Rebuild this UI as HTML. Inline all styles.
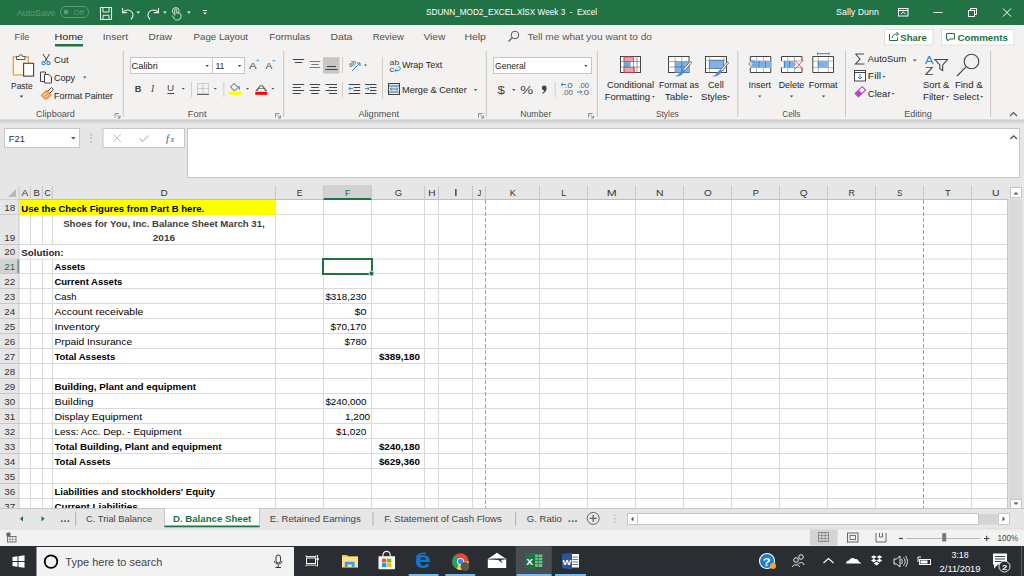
<!DOCTYPE html>
<html><head><meta charset="utf-8"><style>
html,body{margin:0;padding:0;background:#fff;overflow:hidden;width:1024px;height:576px}
svg{display:block;font-family:"Liberation Sans", sans-serif}
</style></head><body>
<svg width="1024" height="576" viewBox="0 0 1024 576">
<rect x="0" y="0" width="1024" height="25" fill="#217346" />
<text x="16.75" y="15.50" font-size="9.2" fill="#5f9c78" font-weight="normal" textLength="38.60" lengthAdjust="spacingAndGlyphs" >AutoSave</text>
<rect x="60.5" y="6.5" width="28" height="11" rx="5.5" fill="none" stroke="#5f9c78" stroke-width="1"/>
<circle cx="66" cy="12" r="2.4" fill="#5f9c78"/>
<text x="73.52" y="15.30" font-size="8" fill="#5f9c78" font-weight="normal" textLength="10.36" lengthAdjust="spacingAndGlyphs" >Off</text>
<path d="M100.5 7.5 h11 v12 h-11 z" stroke="#e6efe9" fill="none" stroke-width="1.1" />
<path d="M103 7.5 v4.5 h6 v-4.5" stroke="#e6efe9" fill="none" stroke-width="1" />
<path d="M103 19.5 v-4.2 h6 v4.2" stroke="#e6efe9" fill="none" stroke-width="1" />
<path d="M122.5 8 v4.6 h4.6" stroke="#e6efe9" fill="none" stroke-width="1.1" />
<path d="M122.8 12.3 c2.5 -3 7.5 -3.2 9.5 0.2 c1.5 2.6 0.5 5 -1.5 7" stroke="#e6efe9" fill="none" stroke-width="1.1" />
<path d="M136.3 11.5 h3.8 l-1.9 2.2 z" stroke="none" fill="#e6efe9" stroke-width="1" />
<path d="M158.5 8 v4.6 h-4.6" stroke="#e6efe9" fill="none" stroke-width="1.1" />
<path d="M158.2 12.3 c-2.5 -3 -7.5 -3.2 -9.5 0.2 c-1.5 2.6 -0.5 5 1.5 7" stroke="#e6efe9" fill="none" stroke-width="1.1" />
<path d="M163 11.5 h3.8 l-1.9 2.2 z" stroke="none" fill="#e6efe9" stroke-width="1" />
<circle cx="175.8" cy="11" r="3.4" fill="none" stroke="#e6efe9" stroke-width="0.9"/>
<path d="M174.8 15.5 v-5.5 a1 1 0 0 1 2 0 v3.3 c1.8 -0.6 4.2 -0.2 4.2 1.8 v1.5 c0 2 -1.5 3.4 -3.5 3.4 h-0.8 c-1.4 0 -2.3 -0.8 -2.9 -2 l-1.3 -2.5" stroke="#e6efe9" fill="#217346" stroke-width="0.9" />
<path d="M187 11.5 h3.8 l-1.9 2.2 z" stroke="none" fill="#e6efe9" stroke-width="1" />
<line x1="203" y1="10.5" x2="207" y2="10.5" stroke="#e6efe9" stroke-width="1" />
<path d="M203 12.5 h4 l-2 2 z" stroke="none" fill="#e6efe9" stroke-width="1" />
<text x="426.01" y="15.20" font-size="9.8" fill="#ffffff" font-weight="normal" textLength="171.08" lengthAdjust="spacingAndGlyphs" >SDUNN_MOD2_EXCEL.XlSX Week 3  -  Excel</text>
<text x="836.11" y="15.30" font-size="9.8" fill="#ffffff" font-weight="normal" textLength="42.78" lengthAdjust="spacingAndGlyphs" >Sally Dunn</text>
<rect x="898.5" y="8.5" width="9.5" height="7.5" fill="none" stroke="#ffffff" stroke-width="1"/>
<line x1="898.5" y1="10.5" x2="908" y2="10.5" stroke="#ffffff" stroke-width="1" />
<path d="M901 14 l2.2-2.2 l2.2 2.2" stroke="#ffffff" fill="none" stroke-width="1" />
<line x1="933.5" y1="12.5" x2="942.5" y2="12.5" stroke="#ffffff" stroke-width="1" />
<rect x="968.5" y="10.5" width="6" height="6" fill="none" stroke="#ffffff" stroke-width="1"/>
<path d="M970.5 10.5 v-2 h6 v6 h-2" stroke="#ffffff" fill="none" stroke-width="1" />
<path d="M1003 8.5 l8 8 M1011 8.5 l-8 8" stroke="#ffffff" fill="none" stroke-width="1" />
<rect x="0" y="25" width="1024" height="95" fill="#f3f2f1" />
<text x="14.62" y="40.10" font-size="9.6" fill="#505050" font-weight="normal" textLength="14.65" lengthAdjust="spacingAndGlyphs" >File</text>
<text x="54.42" y="40.10" font-size="9.6" fill="#262626" font-weight="normal" textLength="28.65" lengthAdjust="spacingAndGlyphs" >Home</text>
<text x="102.72" y="40.10" font-size="9.6" fill="#505050" font-weight="normal" textLength="25.25" lengthAdjust="spacingAndGlyphs" >Insert</text>
<text x="148.62" y="40.10" font-size="9.6" fill="#505050" font-weight="normal" textLength="23.55" lengthAdjust="spacingAndGlyphs" >Draw</text>
<text x="193.62" y="40.10" font-size="9.6" fill="#505050" font-weight="normal" textLength="54.45" lengthAdjust="spacingAndGlyphs" >Page Layout</text>
<text x="269.22" y="40.10" font-size="9.6" fill="#505050" font-weight="normal" textLength="40.95" lengthAdjust="spacingAndGlyphs" >Formulas</text>
<text x="330.42" y="40.10" font-size="9.6" fill="#505050" font-weight="normal" textLength="21.95" lengthAdjust="spacingAndGlyphs" >Data</text>
<text x="372.72" y="40.10" font-size="9.6" fill="#505050" font-weight="normal" textLength="31.15" lengthAdjust="spacingAndGlyphs" >Review</text>
<text x="423.42" y="40.10" font-size="9.6" fill="#505050" font-weight="normal" textLength="21.95" lengthAdjust="spacingAndGlyphs" >View</text>
<text x="464.42" y="40.10" font-size="9.6" fill="#505050" font-weight="normal" textLength="21.55" lengthAdjust="spacingAndGlyphs" >Help</text>
<rect x="55" y="44" width="28" height="2.5" fill="#217346" />
<circle cx="515" cy="35" r="3.8" fill="none" stroke="#555" stroke-width="1"/>
<line x1="512.3" y1="37.7" x2="508.5" y2="41.5" stroke="#555" stroke-width="1.1" />
<text x="527.42" y="40.10" font-size="9.6" fill="#595959" font-weight="normal" textLength="124.55" lengthAdjust="spacingAndGlyphs" >Tell me what you want to do</text>
<rect x="884.5" y="29.5" width="48.5" height="15.5" fill="#ffffff" stroke="#e1dfdd" stroke-width="1"/>
<rect x="941.5" y="29.5" width="72.5" height="15.5" fill="#ffffff" stroke="#e1dfdd" stroke-width="1"/>
<path d="M889.5 34 v6.5 h8 v-3 M892 38 c0.5-2.5 2-4 4.5-4 h1.5 M896.5 32 l2 2 l-2 2" stroke="#1e7145" fill="none" stroke-width="1" />
<text x="900.31" y="40.50" font-size="9.8" fill="#1e7145" font-weight="bold" textLength="26.48" lengthAdjust="spacingAndGlyphs" >Share</text>
<path d="M946.5 33.5 h8 v5.5 h-5 l-2 2 v-2 h-1 z" stroke="#1e7145" fill="none" stroke-width="1" />
<text x="957.41" y="40.50" font-size="9.8" fill="#1e7145" font-weight="bold" textLength="50.58" lengthAdjust="spacingAndGlyphs" >Comments</text>
<line x1="123.3" y1="51" x2="123.3" y2="117" stroke="#c8c6c4" stroke-width="1" />
<line x1="283.7" y1="51" x2="283.7" y2="117" stroke="#c8c6c4" stroke-width="1" />
<line x1="486.3" y1="51" x2="486.3" y2="117" stroke="#c8c6c4" stroke-width="1" />
<line x1="597.3" y1="51" x2="597.3" y2="117" stroke="#c8c6c4" stroke-width="1" />
<line x1="737.8" y1="51" x2="737.8" y2="117" stroke="#c8c6c4" stroke-width="1" />
<line x1="845.5" y1="51" x2="845.5" y2="117" stroke="#c8c6c4" stroke-width="1" />
<line x1="990.6" y1="51" x2="990.6" y2="117" stroke="#c8c6c4" stroke-width="1" />
<text x="36.06" y="117.00" font-size="9" fill="#505050" font-weight="normal" textLength="38.78" lengthAdjust="spacingAndGlyphs" >Clipboard</text>
<text x="187.86" y="117.00" font-size="9" fill="#505050" font-weight="normal" textLength="18.68" lengthAdjust="spacingAndGlyphs" >Font</text>
<text x="358.46" y="117.00" font-size="9" fill="#505050" font-weight="normal" textLength="40.58" lengthAdjust="spacingAndGlyphs" >Alignment</text>
<text x="520.16" y="117.00" font-size="9" fill="#505050" font-weight="normal" textLength="31.18" lengthAdjust="spacingAndGlyphs" >Number</text>
<text x="655.96" y="117.00" font-size="9" fill="#505050" font-weight="normal" textLength="22.78" lengthAdjust="spacingAndGlyphs" >Styles</text>
<text x="782.26" y="117.00" font-size="9" fill="#505050" font-weight="normal" textLength="18.18" lengthAdjust="spacingAndGlyphs" >Cells</text>
<text x="904.16" y="117.00" font-size="9" fill="#505050" font-weight="normal" textLength="27.68" lengthAdjust="spacingAndGlyphs" >Editing</text>
<path d="M115.0 117.5 v-4 h4 M116.5 114.5 l3.5 3.5 M120.0 115.5 v2.5 h-2.5" stroke="#777" fill="none" stroke-width="0.8" />
<path d="M275.5 117.5 v-4 h4 M277 114.5 l3.5 3.5 M280.5 115.5 v2.5 h-2.5" stroke="#777" fill="none" stroke-width="0.8" />
<path d="M478.5 117.5 v-4 h4 M480 114.5 l3.5 3.5 M483.5 115.5 v2.5 h-2.5" stroke="#777" fill="none" stroke-width="0.8" />
<path d="M588.5 117.5 v-4 h4 M590 114.5 l3.5 3.5 M593.5 115.5 v2.5 h-2.5" stroke="#777" fill="none" stroke-width="0.8" />
<path d="M1010 116 l3.5 -3.5 l3.5 3.5" stroke="#555" fill="none" stroke-width="1.2" />
<rect x="13.3" y="56.8" width="15" height="18.2" fill="#fdf6ec" stroke="#f0a048" stroke-width="1.3"/>
<path d="M16.5 59.5 v-3 h2.5 a1.8 1.8 0 0 1 3.6 0 h2.5 v3 z" stroke="#555" fill="#fff" stroke-width="1" />
<rect x="23.6" y="63.3" width="10" height="12.8" fill="#ffffff" stroke="#444" stroke-width="1.1"/>
<text x="11.02" y="88.50" font-size="9.6" fill="#262626" font-weight="normal" textLength="21.65" lengthAdjust="spacingAndGlyphs" >Paste</text>
<path d="M19.5 95.5 h4 l-2 2.2 z" stroke="none" fill="#555" stroke-width="1" />
<path d="M43 54 l4.5 7.5 M49.5 54 l-4.5 7.5" stroke="#444" fill="none" stroke-width="1" />
<circle cx="43.5" cy="63.2" r="1.6" fill="none" stroke="#2b88d8" stroke-width="1.1"/>
<circle cx="48.5" cy="63.2" r="1.6" fill="none" stroke="#2b88d8" stroke-width="1.1"/>
<text x="54.02" y="63.20" font-size="9.6" fill="#262626" font-weight="normal" textLength="14.55" lengthAdjust="spacingAndGlyphs" >Cut</text>
<path d="M40.5 72 h5 v9.5 h-5 z" stroke="#444" fill="none" stroke-width="1" />
<path d="M44.5 74.5 h4.5 l2.5 2.5 v6 h-7 z" stroke="#444" fill="#fff" stroke-width="1" />
<text x="54.02" y="80.50" font-size="9.6" fill="#262626" font-weight="normal" textLength="21.05" lengthAdjust="spacingAndGlyphs" >Copy</text>
<path d="M83 76.5 h3.5 l-1.75 2 z" stroke="none" fill="#555" stroke-width="1" />
<path d="M41 95.5 l5.5-5.5 l5 5 l-2 2 c-1.5 1.5 -3 2 -4.5 2.5 z" stroke="#e07b20" fill="#f39c4a" stroke-width="0.6" />
<path d="M43 96.5 l4 -4 M45 97.8 l3.5 -3.5" stroke="#fff" fill="none" stroke-width="0.8" />
<path d="M47.5 91.5 l4-4 M49.5 93.5 l4-4 M51.5 87.5 l2 2" stroke="#444" fill="none" stroke-width="1" />
<text x="54.02" y="98.70" font-size="9.6" fill="#262626" font-weight="normal" textLength="58.95" lengthAdjust="spacingAndGlyphs" >Format Painter</text>
<rect x="130.5" y="57.5" width="82" height="16" fill="#fff" stroke="#c8c6c4" stroke-width="1"/>
<rect x="212.5" y="57.5" width="32" height="16" fill="#fff" stroke="#c8c6c4" stroke-width="1"/>
<text x="131.42" y="69.10" font-size="9.6" fill="#262626" font-weight="normal" textLength="26.55" lengthAdjust="spacingAndGlyphs" >Calibri</text>
<text x="215.42" y="69.10" font-size="9.6" fill="#262626" font-weight="normal" textLength="8.95" lengthAdjust="spacingAndGlyphs" >11</text>
<path d="M205.5 65 h3.4 l-1.7 2 z" stroke="none" fill="#444" stroke-width="1" />
<path d="M237.9 65 h3.4 l-1.7 2 z" stroke="none" fill="#444" stroke-width="1" />
<text x="248.92" y="68.60" font-size="9.6" fill="#444" font-weight="normal" textLength="7.65" lengthAdjust="spacingAndGlyphs" >A</text>
<path d="M256.2 61.3 l1.5-1.5 l1.5 1.5" stroke="#2b88d8" fill="none" stroke-width="0.9" />
<text x="265.48" y="68.60" font-size="8.6" fill="#444" font-weight="normal" textLength="6.83" lengthAdjust="spacingAndGlyphs" >A</text>
<path d="M272.3 60 l1.5 1.5 l1.5-1.5" stroke="#2b88d8" fill="none" stroke-width="0.9" />
<text x="134.72" y="92.00" font-size="9.6" fill="#444" font-weight="bold" textLength="6.65" lengthAdjust="spacingAndGlyphs" >B</text>
<text x="151" y="92" font-size="9.6" fill="#444" font-style="italic" font-family="Liberation Serif">I</text>
<text x="166.96" y="91.00" font-size="9" fill="#444" font-weight="normal" textLength="7.08" lengthAdjust="spacingAndGlyphs" >U</text>
<line x1="167.5" y1="93.5" x2="174" y2="93.5" stroke="#444" stroke-width="1" />
<path d="M181.8 88 h3 l-1.5 1.8 z" stroke="none" fill="#555" stroke-width="1" />
<line x1="191.5" y1="82" x2="191.5" y2="97" stroke="#d0cecc" stroke-width="1" />
<rect x="197.5" y="83.5" width="11" height="10" fill="none" stroke="#9a9a9a" stroke-width="0.8" stroke-dasharray="1 1"/>
<line x1="203" y1="83.5" x2="203" y2="93.5" stroke="#9a9a9a" stroke-width="0.8" stroke-dasharray="1 1"/>
<line x1="197.5" y1="88.5" x2="208.5" y2="88.5" stroke="#9a9a9a" stroke-width="0.8" stroke-dasharray="1 1"/>
<line x1="197" y1="94.5" x2="209" y2="94.5" stroke="#666" stroke-width="1" />
<path d="M213.8 88 h3 l-1.5 1.8 z" stroke="none" fill="#555" stroke-width="1" />
<line x1="223.8" y1="82" x2="223.8" y2="97" stroke="#d0cecc" stroke-width="1" />
<path d="M230.5 87 l3.5-3.5 l4 4 l-3.5 3.5 z" stroke="#444" fill="none" stroke-width="0.9" />
<path d="M238.5 86 c1 1.5 1.5 2.5 0.5 3.5" stroke="#2b88d8" fill="none" stroke-width="1.2" />
<rect x="229" y="91.8" width="12.5" height="3" fill="#ffff00" />
<path d="M246 88 h3 l-1.5 1.8 z" stroke="none" fill="#555" stroke-width="1" />
<text x="255.41" y="91.00" font-size="9.8" fill="#444" font-weight="normal" textLength="11.48" lengthAdjust="spacingAndGlyphs" >A</text>
<rect x="255.3" y="91.8" width="12" height="3" fill="#ff0000" />
<path d="M271.4 88 h3 l-1.5 1.8 z" stroke="none" fill="#555" stroke-width="1" />
<rect x="323" y="57.2" width="16.5" height="16.4" fill="#c8c6c4" />
<line x1="292.7" y1="59.5" x2="304.2" y2="59.5" stroke="#444" stroke-width="1" />
<line x1="294.7" y1="62.5" x2="302.2" y2="62.5" stroke="#444" stroke-width="1" />
<line x1="292.7" y1="65.5" x2="292.7" y2="65.5" stroke="#444" stroke-width="1" />
<line x1="309.7" y1="61.5" x2="320.2" y2="61.5" stroke="#777" stroke-width="1" />
<line x1="311.2" y1="64.5" x2="318.7" y2="64.5" stroke="#777" stroke-width="1" />
<line x1="309.7" y1="67.5" x2="320.2" y2="67.5" stroke="#777" stroke-width="1" />
<line x1="327.0" y1="66.5" x2="336.0" y2="66.5" stroke="#444" stroke-width="1" />
<line x1="325.5" y1="69.5" x2="337.5" y2="69.5" stroke="#444" stroke-width="1" />
<line x1="342.5" y1="57" x2="342.5" y2="73" stroke="#d0cecc" stroke-width="1" />
<text x="348.61" y="66.00" font-size="6.5" fill="#444" font-weight="normal" textLength="7.78" lengthAdjust="spacingAndGlyphs" transform="rotate(-35 352 64)">ab</text>
<path d="M352 71 l8-8 M357 63 h3 v3" stroke="#2b88d8" fill="none" stroke-width="1" />
<path d="M364 64.5 h3 l-1.5 1.8 z" stroke="none" fill="#555" stroke-width="1" />
<line x1="382.5" y1="57" x2="382.5" y2="99" stroke="#d0cecc" stroke-width="1" />
<text x="389.61" y="64.50" font-size="6.5" fill="#444" font-weight="normal" textLength="9.78" lengthAdjust="spacingAndGlyphs" >ab</text>
<text x="389.61" y="71.50" font-size="6.5" fill="#444" font-weight="normal" textLength="4.78" lengthAdjust="spacingAndGlyphs" >c</text>
<path d="M398 66.5 c3 0 3 4 0 4 h-3 M396.5 69 l-1.7 1.5 l1.7 1.5" stroke="#2b88d8" fill="none" stroke-width="1" />
<text x="402.02" y="68.30" font-size="9.6" fill="#262626" font-weight="normal" textLength="40.15" lengthAdjust="spacingAndGlyphs" >Wrap Text</text>
<line x1="292.7" y1="84.5" x2="304.2" y2="84.5" stroke="#444" stroke-width="1" />
<line x1="292.7" y1="87.5" x2="300.7" y2="87.5" stroke="#444" stroke-width="1" />
<line x1="292.7" y1="90.5" x2="304.2" y2="90.5" stroke="#444" stroke-width="1" />
<line x1="292.7" y1="93.5" x2="300.7" y2="93.5" stroke="#444" stroke-width="1" />
<line x1="309.7" y1="84.5" x2="320.2" y2="84.5" stroke="#444" stroke-width="1" />
<line x1="311.2" y1="87.5" x2="318.7" y2="87.5" stroke="#444" stroke-width="1" />
<line x1="309.7" y1="90.5" x2="320.2" y2="90.5" stroke="#444" stroke-width="1" />
<line x1="311.2" y1="93.5" x2="318.7" y2="93.5" stroke="#444" stroke-width="1" />
<line x1="325.5" y1="84.5" x2="337.0" y2="84.5" stroke="#444" stroke-width="1" />
<line x1="329.0" y1="87.5" x2="337.0" y2="87.5" stroke="#444" stroke-width="1" />
<line x1="325.5" y1="90.5" x2="337.0" y2="90.5" stroke="#444" stroke-width="1" />
<line x1="329.0" y1="93.5" x2="337.0" y2="93.5" stroke="#444" stroke-width="1" />
<line x1="342.5" y1="82" x2="342.5" y2="97" stroke="#d0cecc" stroke-width="1" />
<line x1="348.7" y1="84.5" x2="360.2" y2="84.5" stroke="#444" stroke-width="1" />
<line x1="353.7" y1="87.5" x2="360.2" y2="87.5" stroke="#444" stroke-width="1" />
<line x1="353.7" y1="90.5" x2="360.2" y2="90.5" stroke="#444" stroke-width="1" />
<line x1="348.7" y1="93.5" x2="360.2" y2="93.5" stroke="#444" stroke-width="1" />
<path d="M353 88.6 h-4 M350.5 87 l-1.7 1.6 l1.7 1.6" stroke="#2b88d8" fill="none" stroke-width="1" />
<line x1="365" y1="84.5" x2="376.5" y2="84.5" stroke="#444" stroke-width="1" />
<line x1="370" y1="87.5" x2="376.5" y2="87.5" stroke="#444" stroke-width="1" />
<line x1="370" y1="90.5" x2="376.5" y2="90.5" stroke="#444" stroke-width="1" />
<line x1="365" y1="93.5" x2="376.5" y2="93.5" stroke="#444" stroke-width="1" />
<path d="M365 88.6 h4 M367.5 87 l1.7 1.6 l-1.7 1.6" stroke="#2b88d8" fill="none" stroke-width="1" />
<rect x="388.5" y="83.5" width="11" height="11" fill="#dbe9f6" stroke="#444" stroke-width="1"/>
<path d="M390.5 89 h7 M391.8 87.5 l-1.5 1.5 l1.5 1.5 M396.2 87.5 l1.5 1.5 l-1.5 1.5" stroke="#2b88d8" fill="none" stroke-width="1" />
<line x1="388.5" y1="86" x2="399.5" y2="86" stroke="#444" stroke-width="0.8" />
<line x1="388.5" y1="92" x2="399.5" y2="92" stroke="#444" stroke-width="0.8" />
<text x="402.02" y="92.50" font-size="9.6" fill="#262626" font-weight="normal" textLength="64.75" lengthAdjust="spacingAndGlyphs" >Merge &amp; Center</text>
<path d="M473.8 89 h3.5 l-1.75 2 z" stroke="none" fill="#555" stroke-width="1" />
<rect x="493.5" y="57.5" width="98" height="16" fill="#fff" stroke="#c8c6c4" stroke-width="1"/>
<text x="495.12" y="69.10" font-size="9.6" fill="#262626" font-weight="normal" textLength="30.55" lengthAdjust="spacingAndGlyphs" >General</text>
<path d="M584.2 65 h3.2 l-1.6 2 z" stroke="none" fill="#444" stroke-width="1" />
<text x="497.61" y="93.50" font-size="11.5" fill="#444" font-weight="normal" textLength="7.38" lengthAdjust="spacingAndGlyphs" >$</text>
<path d="M512 89 h3.5 l-1.75 2 z" stroke="none" fill="#555" stroke-width="1" />
<text x="520.34" y="94.00" font-size="11" fill="#444" font-weight="normal" textLength="12.92" lengthAdjust="spacingAndGlyphs" >%</text>
<circle cx="544.2" cy="88" r="2.4" fill="#444"/>
<path d="M546.6 88 c0 2.5 -1.5 4.6 -4.3 5.8 l-0.4 -0.6 c1.8 -1.2 2.6 -2.6 2.4 -4 z" stroke="none" fill="#444" stroke-width="1" />
<line x1="555.2" y1="82" x2="555.2" y2="97" stroke="#d0cecc" stroke-width="1" />
<text x="564.61" y="87.50" font-size="6.5" fill="#555" font-weight="normal" textLength="8.08" lengthAdjust="spacingAndGlyphs" >.0</text>
<text x="562.11" y="94.50" font-size="6.5" fill="#555" font-weight="normal" textLength="10.58" lengthAdjust="spacingAndGlyphs" >.00</text>
<path d="M566 84.5 h-5 M562.7 83 l-1.7 1.5 l1.7 1.5" stroke="#2b88d8" fill="none" stroke-width="1" />
<text x="578.41" y="87.50" font-size="6.5" fill="#555" font-weight="normal" textLength="10.68" lengthAdjust="spacingAndGlyphs" >.00</text>
<text x="581.11" y="94.50" font-size="6.5" fill="#555" font-weight="normal" textLength="7.98" lengthAdjust="spacingAndGlyphs" >.0</text>
<path d="M577 92 h5 M580.3 90.5 l1.7 1.5 l-1.7 1.5" stroke="#2b88d8" fill="none" stroke-width="1" />
<rect x="620.5" y="56.5" width="20" height="16" fill="#fff" stroke="#444" stroke-width="1"/>
<rect x="624" y="57" width="9.5" height="4.5" fill="#f4a0a8" />
<rect x="624" y="67.5" width="10.5" height="4.5" fill="#f4a0a8" />
<rect x="624" y="62" width="6.5" height="5" fill="#6fa8dc" />
<line x1="624" y1="56.5" x2="624" y2="72.5" stroke="#777" stroke-width="0.7" />
<line x1="633.5" y1="56.5" x2="633.5" y2="72.5" stroke="#777" stroke-width="0.7" />
<line x1="637" y1="56.5" x2="637" y2="72.5" stroke="#777" stroke-width="0.7" />
<line x1="620.5" y1="61.5" x2="640.5" y2="61.5" stroke="#777" stroke-width="0.7" />
<line x1="620.5" y1="67" x2="640.5" y2="67" stroke="#777" stroke-width="0.7" />
<rect x="624" y="57" width="9.5" height="4.5" fill="none" stroke="#e04050" stroke-width="0.7"/>
<rect x="624" y="67.5" width="10.5" height="4.8" fill="none" stroke="#e04050" stroke-width="0.7"/>
<text x="606.92" y="88.30" font-size="9.6" fill="#262626" font-weight="normal" textLength="47.25" lengthAdjust="spacingAndGlyphs" >Conditional</text>
<text x="604.72" y="100.00" font-size="9.6" fill="#262626" font-weight="normal" textLength="45.35" lengthAdjust="spacingAndGlyphs" >Formatting</text>
<path d="M652 96 h3 l-1.5 1.8 z" stroke="none" fill="#555" stroke-width="1" />
<rect x="668.5" y="56.5" width="20.5" height="16" fill="#fff" stroke="#444" stroke-width="1"/>
<rect x="675" y="61.5" width="14" height="11" fill="#7fb2e5" />
<line x1="675" y1="56.5" x2="675" y2="72.5" stroke="#888" stroke-width="0.7" />
<line x1="681.8" y1="56.5" x2="681.8" y2="72.5" stroke="#888" stroke-width="0.7" />
<line x1="668.5" y1="61.5" x2="689" y2="61.5" stroke="#888" stroke-width="0.7" />
<line x1="668.5" y1="67" x2="689" y2="67" stroke="#888" stroke-width="0.7" />
<line x1="681.8" y1="61.5" x2="681.8" y2="72.5" stroke="#3a80c8" stroke-width="0.8" />
<line x1="675" y1="67" x2="689" y2="67" stroke="#3a80c8" stroke-width="0.8" />
<path d="M683.5 69 l6.5 -7.3 a0.9 0.9 0 0 1 1.3 1.2 l-6.3 7.6" stroke="#555" fill="#fff" stroke-width="0.8" />
<path d="M674 76 c1.5 0 3 -0.3 4.5 -1.8 c2 -2 3 -4 5 -5.2 l1.8 1.6 c-1 2 -2.5 3.5 -4.5 4.8 c-2 1.2 -4.5 1.2 -6.8 0.6 z" stroke="none" fill="#4a90d9" stroke-width="1" />
<text x="658.92" y="88.30" font-size="9.6" fill="#262626" font-weight="normal" textLength="39.95" lengthAdjust="spacingAndGlyphs" >Format as</text>
<text x="664.72" y="100.00" font-size="9.6" fill="#262626" font-weight="normal" textLength="23.85" lengthAdjust="spacingAndGlyphs" >Table</text>
<path d="M689.5 96 h3 l-1.5 1.8 z" stroke="none" fill="#555" stroke-width="1" />
<rect x="705.5" y="56.5" width="21" height="16" fill="#fff" stroke="#444" stroke-width="1"/>
<rect x="709.4" y="60.3" width="14.3" height="8.2" fill="#7fb2e5" />
<rect x="709.4" y="60.3" width="14.3" height="8.2" fill="none" stroke="#2b78c8" stroke-width="0.9"/>
<line x1="709.4" y1="56.5" x2="709.4" y2="72.5" stroke="#888" stroke-width="0.6" />
<line x1="723.7" y1="56.5" x2="723.7" y2="72.5" stroke="#888" stroke-width="0.6" />
<line x1="705.5" y1="60.3" x2="726.5" y2="60.3" stroke="#888" stroke-width="0.6" />
<line x1="705.5" y1="68.5" x2="726.5" y2="68.5" stroke="#888" stroke-width="0.6" />
<path d="M720.5 69.5 l6.5 -7.3 a0.9 0.9 0 0 1 1.3 1.2 l-6.3 7.6" stroke="#555" fill="#fff" stroke-width="0.8" />
<path d="M711 76.2 c1.5 0 3 -0.3 4.5 -1.8 c2 -2 3 -4 5 -5.2 l1.8 1.6 c-1 2 -2.5 3.5 -4.5 4.8 c-2 1.2 -4.5 1.2 -6.8 0.6 z" stroke="none" fill="#4a90d9" stroke-width="1" />
<text x="707.92" y="88.30" font-size="9.6" fill="#262626" font-weight="normal" textLength="15.85" lengthAdjust="spacingAndGlyphs" >Cell</text>
<text x="701.02" y="100.00" font-size="9.6" fill="#262626" font-weight="normal" textLength="26.05" lengthAdjust="spacingAndGlyphs" >Styles</text>
<path d="M727 96 h3 l-1.5 1.8 z" stroke="none" fill="#555" stroke-width="1" />
<rect x="749.8" y="56" width="21" height="16.7" fill="#fff" />
<line x1="750.3" y1="61" x2="770.8" y2="61" stroke="#999" stroke-width="0.7" />
<line x1="750.3" y1="67.6" x2="770.8" y2="67.6" stroke="#999" stroke-width="0.7" />
<line x1="756.6" y1="56.5" x2="756.6" y2="72.5" stroke="#999" stroke-width="0.7" />
<line x1="763.4" y1="56.5" x2="763.4" y2="72.5" stroke="#999" stroke-width="0.7" />
<line x1="750.3" y1="56.5" x2="770.8" y2="56.5" stroke="#444" stroke-width="1" />
<line x1="750.3" y1="72.5" x2="770.8" y2="72.5" stroke="#444" stroke-width="1" />
<line x1="750.3" y1="56.5" x2="750.3" y2="61" stroke="#444" stroke-width="1" />
<line x1="750.3" y1="67.6" x2="750.3" y2="72.5" stroke="#444" stroke-width="1" />
<line x1="770.8" y1="56.5" x2="770.8" y2="61" stroke="#444" stroke-width="1" />
<line x1="770.8" y1="67.6" x2="770.8" y2="72.5" stroke="#444" stroke-width="1" />
<rect x="752.7" y="61" width="19" height="6.6" fill="#7fb2e5" />
<line x1="759" y1="61" x2="759" y2="67.6" stroke="#2b78c8" stroke-width="0.8" />
<line x1="765.4" y1="61" x2="765.4" y2="67.6" stroke="#2b78c8" stroke-width="0.8" />
<path d="M757.5 62.5 h-5.5 l2.5 -2.5 M752 62.5 v2.5 h5.5 M752 65 l2.5 2.5" stroke="#5aa0e0" fill="none" stroke-width="1" />
<path d="M748.6 63.8 l4 -3.8 M748.6 63.8 l4 3.8" stroke="#5aa0e0" fill="none" stroke-width="1.1" />
<text x="748.52" y="87.80" font-size="9.6" fill="#262626" font-weight="normal" textLength="22.35" lengthAdjust="spacingAndGlyphs" >Insert</text>
<path d="M758 95.5 h3.5 l-1.75 2 z" stroke="none" fill="#555" stroke-width="1" />
<rect x="781" y="56" width="21" height="16.7" fill="#fff" />
<line x1="781.5" y1="61" x2="802" y2="61" stroke="#999" stroke-width="0.7" />
<line x1="781.5" y1="67.6" x2="802" y2="67.6" stroke="#999" stroke-width="0.7" />
<line x1="787.8" y1="56.5" x2="787.8" y2="72.5" stroke="#999" stroke-width="0.7" />
<line x1="794.5" y1="56.5" x2="794.5" y2="72.5" stroke="#999" stroke-width="0.7" />
<line x1="781.5" y1="56.5" x2="802" y2="56.5" stroke="#444" stroke-width="1" />
<line x1="781.5" y1="72.5" x2="802" y2="72.5" stroke="#444" stroke-width="1" />
<line x1="781.5" y1="56.5" x2="781.5" y2="61" stroke="#444" stroke-width="1" />
<line x1="781.5" y1="67.6" x2="781.5" y2="72.5" stroke="#444" stroke-width="1" />
<line x1="802" y1="56.5" x2="802" y2="61" stroke="#444" stroke-width="1" />
<line x1="802" y1="67.6" x2="802" y2="72.5" stroke="#444" stroke-width="1" />
<rect x="784" y="61" width="9" height="6.6" fill="#7fb2e5" />
<path d="M793 61 l3.2 3.3 l-3.2 3.3 z" stroke="none" fill="#7fb2e5" stroke-width="1" />
<line x1="784.3" y1="61" x2="784.3" y2="67.6" stroke="#2b78c8" stroke-width="1" />
<line x1="789.5" y1="61" x2="789.5" y2="67.6" stroke="#2b78c8" stroke-width="0.8" />
<path d="M795 60.5 l8 8.5 M803 60.5 l-8 8.5" stroke="#f05050" fill="none" stroke-width="1" />
<text x="778.72" y="87.80" font-size="9.6" fill="#262626" font-weight="normal" textLength="25.55" lengthAdjust="spacingAndGlyphs" >Delete</text>
<path d="M789.8 95.5 h3.5 l-1.75 2 z" stroke="none" fill="#555" stroke-width="1" />
<rect x="812.3" y="56" width="21.5" height="16.7" fill="#fff" />
<line x1="812.8" y1="61" x2="833.5" y2="61" stroke="#999" stroke-width="0.7" />
<line x1="812.8" y1="67.6" x2="833.5" y2="67.6" stroke="#999" stroke-width="0.7" />
<line x1="818.3" y1="56.5" x2="818.3" y2="72.5" stroke="#999" stroke-width="0.7" />
<line x1="828.3" y1="56.5" x2="828.3" y2="72.5" stroke="#999" stroke-width="0.7" />
<line x1="812.8" y1="56.5" x2="833.5" y2="56.5" stroke="#444" stroke-width="1" />
<line x1="812.8" y1="72.5" x2="833.5" y2="72.5" stroke="#444" stroke-width="1" />
<line x1="812.8" y1="56.5" x2="812.8" y2="72.5" stroke="#444" stroke-width="1" />
<line x1="833.5" y1="56.5" x2="833.5" y2="72.5" stroke="#444" stroke-width="1" />
<rect x="818.3" y="61" width="10" height="6.6" fill="#7fb2e5" />
<line x1="818.3" y1="61" x2="818.3" y2="67.6" stroke="#2b78c8" stroke-width="0.9" />
<path d="M817.5 53.7 h11.5 M817.5 52.5 v2.5 M829 52.5 v2.5" stroke="#2b78c8" fill="none" stroke-width="0.9" />
<text x="808.72" y="87.80" font-size="9.6" fill="#262626" font-weight="normal" textLength="28.95" lengthAdjust="spacingAndGlyphs" >Format</text>
<path d="M821.8 95.5 h3.5 l-1.75 2 z" stroke="none" fill="#555" stroke-width="1" />
<path d="M855.5 54 h8.5 M855.5 54 l4.5 5 l-4.5 5 h9" stroke="#444" fill="none" stroke-width="1.1" />
<text x="867.82" y="62.40" font-size="9.6" fill="#262626" font-weight="normal" textLength="38.35" lengthAdjust="spacingAndGlyphs" >AutoSum</text>
<path d="M912.8 59.5 h4 l-2 2 z" stroke="none" fill="#555" stroke-width="1" />
<rect x="854.5" y="70.5" width="11" height="10.5" fill="#fff" stroke="#444" stroke-width="1"/>
<line x1="854.5" y1="72.5" x2="865.5" y2="72.5" stroke="#444" stroke-width="1" />
<path d="M860 74 v5 M858 77 l2 2 l2 -2" stroke="#2b88d8" fill="none" stroke-width="1" />
<text x="867.82" y="79.40" font-size="9.6" fill="#262626" font-weight="normal" textLength="13.25" lengthAdjust="spacingAndGlyphs" >Fill</text>
<path d="M882.5 76 h3 l-1.5 1.8 z" stroke="none" fill="#555" stroke-width="1" />
<path d="M855.2 93.5 l7 -6.8 l3.3 3.3 l-7 6.8 z" stroke="#b146c2" fill="#fff" stroke-width="1.1" />
<path d="M855.2 93.5 l3.6 -3.5 l3.3 3.3 l-3.6 3.5 z" stroke="none" fill="#b146c2" stroke-width="1" />
<text x="867.82" y="96.90" font-size="9.6" fill="#262626" font-weight="normal" textLength="22.75" lengthAdjust="spacingAndGlyphs" >Clear</text>
<path d="M891.5 93 h3 l-1.5 1.8 z" stroke="none" fill="#555" stroke-width="1" />
<text x="924.87" y="64.00" font-size="10.5" fill="#2b88d8" font-weight="normal" textLength="8.76" lengthAdjust="spacingAndGlyphs" >A</text>
<text x="924.87" y="75.20" font-size="10.5" fill="#444" font-weight="normal" textLength="8.76" lengthAdjust="spacingAndGlyphs" >Z</text>
<path d="M935 59.5 h12.5 l-4.8 5.5 v5.5 l-2.9 -1.8 v-3.7 z" stroke="#444" fill="none" stroke-width="1.1" />
<text x="923.02" y="88.40" font-size="9.6" fill="#262626" font-weight="normal" textLength="26.25" lengthAdjust="spacingAndGlyphs" >Sort &amp;</text>
<text x="923.02" y="100.00" font-size="9.6" fill="#262626" font-weight="normal" textLength="21.55" lengthAdjust="spacingAndGlyphs" >Filter</text>
<path d="M946 96 h3 l-1.5 1.8 z" stroke="none" fill="#555" stroke-width="1" />
<circle cx="971.5" cy="61.5" r="7.3" fill="none" stroke="#444" stroke-width="1.1"/>
<line x1="966.3" y1="66.7" x2="957" y2="76" stroke="#444" stroke-width="1.1" />
<text x="954.92" y="88.40" font-size="9.6" fill="#262626" font-weight="normal" textLength="27.65" lengthAdjust="spacingAndGlyphs" >Find &amp;</text>
<text x="953.02" y="100.00" font-size="9.6" fill="#262626" font-weight="normal" textLength="26.05" lengthAdjust="spacingAndGlyphs" >Select</text>
<path d="M980.3 96 h3 l-1.5 1.8 z" stroke="none" fill="#555" stroke-width="1" />
<rect x="0" y="120" width="1024" height="65" fill="#e6e6e6" />
<defs><linearGradient id="sh" x1="0" y1="0" x2="0" y2="1"><stop offset="0" stop-color="#c9c9c9"/><stop offset="1" stop-color="#e6e6e6"/></linearGradient></defs>
<rect x="0" y="119.5" width="1024" height="5" fill="url(#sh)" />
<rect x="4.5" y="128.5" width="75" height="19" fill="#fff" stroke="#c6c6c6" stroke-width="1"/>
<text x="8.71" y="142.00" font-size="9.8" fill="#333" font-weight="normal" textLength="16.28" lengthAdjust="spacingAndGlyphs" >F21</text>
<path d="M71 137 h4.6 l-2.3 2.6 z" stroke="none" fill="#555" stroke-width="1" />
<rect x="90.7" y="134" width="1" height="1.5" fill="#999" />
<rect x="90.7" y="137.5" width="1" height="1.5" fill="#999" />
<rect x="90.7" y="141" width="1" height="1.5" fill="#999" />
<rect x="103" y="128.5" width="81.5" height="19" fill="#fff" stroke="#c6c6c6" stroke-width="1"/>
<path d="M113 134 l8 8 M121 134 l-8 8" stroke="#c4c4c4" fill="none" stroke-width="1" />
<path d="M139.5 138.5 l3 3 l6 -6" stroke="#c4c4c4" fill="none" stroke-width="1.2" />
<text x="166" y="142" font-size="10.5" fill="#555" font-style="italic" font-family="Liberation Serif">f</text>
<text x="170.5" y="142" font-size="8.5" fill="#555" font-style="italic" font-family="Liberation Serif">x</text>
<rect x="187.5" y="128.5" width="832" height="49" fill="#fff" stroke="#c6c6c6" stroke-width="1"/>
<path d="M1010.5 139 l3.2-3.2 l3.2 3.2" stroke="#444" fill="none" stroke-width="1.1" />
<rect x="0" y="185" width="1008" height="14.5" fill="#e6e6e6" />
<rect x="323.4" y="185" width="48.10000000000002" height="14.5" fill="#d2d2d2" />
<line x1="0" y1="199.5" x2="1008" y2="199.5" stroke="#bfbfbf" stroke-width="1" />
<line x1="323.4" y1="199" x2="371.5" y2="199" stroke="#217346" stroke-width="2" />
<line x1="30.3" y1="186" x2="30.3" y2="199" stroke="#c6c6c6" stroke-width="1" />
<line x1="42.4" y1="186" x2="42.4" y2="199" stroke="#c6c6c6" stroke-width="1" />
<line x1="52.3" y1="186" x2="52.3" y2="199" stroke="#c6c6c6" stroke-width="1" />
<line x1="275.4" y1="186" x2="275.4" y2="199" stroke="#c6c6c6" stroke-width="1" />
<line x1="323.4" y1="186" x2="323.4" y2="199" stroke="#c6c6c6" stroke-width="1" />
<line x1="371.5" y1="186" x2="371.5" y2="199" stroke="#c6c6c6" stroke-width="1" />
<line x1="424.7" y1="186" x2="424.7" y2="199" stroke="#c6c6c6" stroke-width="1" />
<line x1="438.5" y1="186" x2="438.5" y2="199" stroke="#c6c6c6" stroke-width="1" />
<line x1="472.5" y1="186" x2="472.5" y2="199" stroke="#c6c6c6" stroke-width="1" />
<line x1="485.5" y1="186" x2="485.5" y2="199" stroke="#c6c6c6" stroke-width="1" />
<line x1="539.5" y1="186" x2="539.5" y2="199" stroke="#c6c6c6" stroke-width="1" />
<line x1="587.5" y1="186" x2="587.5" y2="199" stroke="#c6c6c6" stroke-width="1" />
<line x1="635.5" y1="186" x2="635.5" y2="199" stroke="#c6c6c6" stroke-width="1" />
<line x1="683.5" y1="186" x2="683.5" y2="199" stroke="#c6c6c6" stroke-width="1" />
<line x1="731.5" y1="186" x2="731.5" y2="199" stroke="#c6c6c6" stroke-width="1" />
<line x1="779.5" y1="186" x2="779.5" y2="199" stroke="#c6c6c6" stroke-width="1" />
<line x1="827.5" y1="186" x2="827.5" y2="199" stroke="#c6c6c6" stroke-width="1" />
<line x1="875.5" y1="186" x2="875.5" y2="199" stroke="#c6c6c6" stroke-width="1" />
<line x1="923.5" y1="186" x2="923.5" y2="199" stroke="#c6c6c6" stroke-width="1" />
<line x1="971.5" y1="186" x2="971.5" y2="199" stroke="#c6c6c6" stroke-width="1" />
<path d="M8 197 h8 v-8 z" stroke="none" fill="#b8b8b8" stroke-width="1" />
<line x1="19" y1="186" x2="19" y2="199" stroke="#c6c6c6" stroke-width="1" />
<rect x="19.5" y="200" width="988.0" height="308.5" fill="#ffffff" />
<line x1="19" y1="214.5" x2="1007.5" y2="214.5" stroke="#dadada" stroke-width="1" />
<line x1="19" y1="244.5" x2="1007.5" y2="244.5" stroke="#dadada" stroke-width="1" />
<line x1="19" y1="259.1" x2="1007.5" y2="259.1" stroke="#dadada" stroke-width="1" />
<line x1="19" y1="273.5" x2="1007.5" y2="273.5" stroke="#dadada" stroke-width="1" />
<line x1="19" y1="288.5" x2="1007.5" y2="288.5" stroke="#dadada" stroke-width="1" />
<line x1="19" y1="303.5" x2="1007.5" y2="303.5" stroke="#dadada" stroke-width="1" />
<line x1="19" y1="318.5" x2="1007.5" y2="318.5" stroke="#dadada" stroke-width="1" />
<line x1="19" y1="333.5" x2="1007.5" y2="333.5" stroke="#dadada" stroke-width="1" />
<line x1="19" y1="348.5" x2="1007.5" y2="348.5" stroke="#dadada" stroke-width="1" />
<line x1="19" y1="363.5" x2="1007.5" y2="363.5" stroke="#dadada" stroke-width="1" />
<line x1="19" y1="378.5" x2="1007.5" y2="378.5" stroke="#dadada" stroke-width="1" />
<line x1="19" y1="393.5" x2="1007.5" y2="393.5" stroke="#dadada" stroke-width="1" />
<line x1="19" y1="408.5" x2="1007.5" y2="408.5" stroke="#dadada" stroke-width="1" />
<line x1="19" y1="423.5" x2="1007.5" y2="423.5" stroke="#dadada" stroke-width="1" />
<line x1="19" y1="438.5" x2="1007.5" y2="438.5" stroke="#dadada" stroke-width="1" />
<line x1="19" y1="453.5" x2="1007.5" y2="453.5" stroke="#dadada" stroke-width="1" />
<line x1="19" y1="468.5" x2="1007.5" y2="468.5" stroke="#dadada" stroke-width="1" />
<line x1="19" y1="483.5" x2="1007.5" y2="483.5" stroke="#dadada" stroke-width="1" />
<line x1="19" y1="498.5" x2="1007.5" y2="498.5" stroke="#dadada" stroke-width="1" />
<line x1="30.5" y1="200" x2="30.5" y2="508" stroke="#dadada" stroke-width="1" />
<line x1="42.5" y1="200" x2="42.5" y2="508" stroke="#dadada" stroke-width="1" />
<line x1="52.5" y1="200" x2="52.5" y2="508" stroke="#dadada" stroke-width="1" />
<line x1="275.5" y1="200" x2="275.5" y2="508" stroke="#dadada" stroke-width="1" />
<line x1="323.5" y1="200" x2="323.5" y2="508" stroke="#dadada" stroke-width="1" />
<line x1="371.5" y1="200" x2="371.5" y2="508" stroke="#dadada" stroke-width="1" />
<line x1="424.5" y1="200" x2="424.5" y2="508" stroke="#dadada" stroke-width="1" />
<line x1="438.5" y1="200" x2="438.5" y2="508" stroke="#dadada" stroke-width="1" />
<line x1="472.5" y1="200" x2="472.5" y2="508" stroke="#dadada" stroke-width="1" />
<line x1="485.5" y1="200" x2="485.5" y2="508" stroke="#a0a0a0" stroke-width="1" stroke-dasharray="4 2"/>
<line x1="539.5" y1="200" x2="539.5" y2="508" stroke="#dadada" stroke-width="1" />
<line x1="587.5" y1="200" x2="587.5" y2="508" stroke="#dadada" stroke-width="1" />
<line x1="635.5" y1="200" x2="635.5" y2="508" stroke="#dadada" stroke-width="1" />
<line x1="683.5" y1="200" x2="683.5" y2="508" stroke="#dadada" stroke-width="1" />
<line x1="731.5" y1="200" x2="731.5" y2="508" stroke="#dadada" stroke-width="1" />
<line x1="779.5" y1="200" x2="779.5" y2="508" stroke="#dadada" stroke-width="1" />
<line x1="827.5" y1="200" x2="827.5" y2="508" stroke="#dadada" stroke-width="1" />
<line x1="875.5" y1="200" x2="875.5" y2="508" stroke="#dadada" stroke-width="1" />
<line x1="923.5" y1="200" x2="923.5" y2="508" stroke="#a0a0a0" stroke-width="1" stroke-dasharray="4 2"/>
<line x1="971.5" y1="200" x2="971.5" y2="508" stroke="#dadada" stroke-width="1" />
<rect x="19.5" y="200" width="256" height="15" fill="#ffff00" />
<rect x="20" y="245" width="255" height="13.5" fill="#ffffff" />
<line x1="1007.5" y1="199" x2="1007.5" y2="508" stroke="#c6c6c6" stroke-width="1" />
<rect x="0" y="199.5" width="19" height="308.5" fill="#e6e6e6" />
<line x1="0" y1="214.5" x2="19" y2="214.5" stroke="#c8c8c8" stroke-width="1" />
<line x1="0" y1="244.5" x2="19" y2="244.5" stroke="#c8c8c8" stroke-width="1" />
<line x1="0" y1="259.1" x2="19" y2="259.1" stroke="#c8c8c8" stroke-width="1" />
<line x1="0" y1="273.5" x2="19" y2="273.5" stroke="#c8c8c8" stroke-width="1" />
<rect x="0" y="259.6" width="19" height="13.399999999999977" fill="#d2d2d2" />
<line x1="18.4" y1="259.6" x2="18.4" y2="273" stroke="#217346" stroke-width="1.6" />
<line x1="0" y1="288.5" x2="19" y2="288.5" stroke="#c8c8c8" stroke-width="1" />
<line x1="0" y1="303.5" x2="19" y2="303.5" stroke="#c8c8c8" stroke-width="1" />
<line x1="0" y1="318.5" x2="19" y2="318.5" stroke="#c8c8c8" stroke-width="1" />
<line x1="0" y1="333.5" x2="19" y2="333.5" stroke="#c8c8c8" stroke-width="1" />
<line x1="0" y1="348.5" x2="19" y2="348.5" stroke="#c8c8c8" stroke-width="1" />
<line x1="0" y1="363.5" x2="19" y2="363.5" stroke="#c8c8c8" stroke-width="1" />
<line x1="0" y1="378.5" x2="19" y2="378.5" stroke="#c8c8c8" stroke-width="1" />
<line x1="0" y1="393.5" x2="19" y2="393.5" stroke="#c8c8c8" stroke-width="1" />
<line x1="0" y1="408.5" x2="19" y2="408.5" stroke="#c8c8c8" stroke-width="1" />
<line x1="0" y1="423.5" x2="19" y2="423.5" stroke="#c8c8c8" stroke-width="1" />
<line x1="0" y1="438.5" x2="19" y2="438.5" stroke="#c8c8c8" stroke-width="1" />
<line x1="0" y1="453.5" x2="19" y2="453.5" stroke="#c8c8c8" stroke-width="1" />
<line x1="0" y1="468.5" x2="19" y2="468.5" stroke="#c8c8c8" stroke-width="1" />
<line x1="0" y1="483.5" x2="19" y2="483.5" stroke="#c8c8c8" stroke-width="1" />
<line x1="0" y1="498.5" x2="19" y2="498.5" stroke="#c8c8c8" stroke-width="1" />
<line x1="19" y1="199" x2="19" y2="508" stroke="#c6c6c6" stroke-width="1" />
<text x="4.33" y="210.80" font-size="9.5" fill="#333333" font-weight="normal" textLength="10.94" lengthAdjust="spacingAndGlyphs" >18</text>
<text x="4.33" y="240.80" font-size="9.5" fill="#333333" font-weight="normal" textLength="10.94" lengthAdjust="spacingAndGlyphs" >19</text>
<text x="4.33" y="255.40" font-size="9.5" fill="#333333" font-weight="normal" textLength="10.94" lengthAdjust="spacingAndGlyphs" >20</text>
<text x="4.33" y="269.80" font-size="9.5" fill="#1e6e42" font-weight="normal" textLength="10.94" lengthAdjust="spacingAndGlyphs" >21</text>
<text x="4.33" y="284.80" font-size="9.5" fill="#333333" font-weight="normal" textLength="10.94" lengthAdjust="spacingAndGlyphs" >22</text>
<text x="4.33" y="299.80" font-size="9.5" fill="#333333" font-weight="normal" textLength="10.94" lengthAdjust="spacingAndGlyphs" >23</text>
<text x="4.33" y="314.80" font-size="9.5" fill="#333333" font-weight="normal" textLength="10.94" lengthAdjust="spacingAndGlyphs" >24</text>
<text x="4.33" y="329.80" font-size="9.5" fill="#333333" font-weight="normal" textLength="10.94" lengthAdjust="spacingAndGlyphs" >25</text>
<text x="4.33" y="344.80" font-size="9.5" fill="#333333" font-weight="normal" textLength="10.94" lengthAdjust="spacingAndGlyphs" >26</text>
<text x="4.33" y="359.80" font-size="9.5" fill="#333333" font-weight="normal" textLength="10.94" lengthAdjust="spacingAndGlyphs" >27</text>
<text x="4.33" y="374.80" font-size="9.5" fill="#333333" font-weight="normal" textLength="10.94" lengthAdjust="spacingAndGlyphs" >28</text>
<text x="4.33" y="389.80" font-size="9.5" fill="#333333" font-weight="normal" textLength="10.94" lengthAdjust="spacingAndGlyphs" >29</text>
<text x="4.33" y="404.80" font-size="9.5" fill="#333333" font-weight="normal" textLength="10.94" lengthAdjust="spacingAndGlyphs" >30</text>
<text x="4.33" y="419.80" font-size="9.5" fill="#333333" font-weight="normal" textLength="10.94" lengthAdjust="spacingAndGlyphs" >31</text>
<text x="4.33" y="434.80" font-size="9.5" fill="#333333" font-weight="normal" textLength="10.94" lengthAdjust="spacingAndGlyphs" >32</text>
<text x="4.33" y="449.80" font-size="9.5" fill="#333333" font-weight="normal" textLength="10.94" lengthAdjust="spacingAndGlyphs" >33</text>
<text x="4.33" y="464.80" font-size="9.5" fill="#333333" font-weight="normal" textLength="10.94" lengthAdjust="spacingAndGlyphs" >34</text>
<text x="4.33" y="479.80" font-size="9.5" fill="#333333" font-weight="normal" textLength="10.94" lengthAdjust="spacingAndGlyphs" >35</text>
<text x="4.33" y="494.80" font-size="9.5" fill="#333333" font-weight="normal" textLength="10.94" lengthAdjust="spacingAndGlyphs" >36</text>
<text x="4.33" y="509.80" font-size="9.5" fill="#333333" font-weight="normal" textLength="10.94" lengthAdjust="spacingAndGlyphs" >37</text>
<text x="21.56" y="196.00" font-size="9.6" fill="#333333" font-weight="normal" textLength="6.78" lengthAdjust="spacingAndGlyphs" >A</text>
<text x="33.46" y="196.00" font-size="9.6" fill="#333333" font-weight="normal" textLength="6.37" lengthAdjust="spacingAndGlyphs" >B</text>
<text x="44.53" y="196.00" font-size="9.6" fill="#333333" font-weight="normal" textLength="6.25" lengthAdjust="spacingAndGlyphs" >C</text>
<text x="160.56" y="196.00" font-size="9.6" fill="#333333" font-weight="normal" textLength="7.19" lengthAdjust="spacingAndGlyphs" >D</text>
<text x="296.84" y="196.00" font-size="9.6" fill="#333333" font-weight="normal" textLength="5.73" lengthAdjust="spacingAndGlyphs" >E</text>
<text x="345.05" y="196.00" font-size="9.6" fill="#1e6e42" font-weight="normal" textLength="5.40" lengthAdjust="spacingAndGlyphs" >F</text>
<text x="394.71" y="196.00" font-size="9.6" fill="#333333" font-weight="normal" textLength="7.37" lengthAdjust="spacingAndGlyphs" >G</text>
<text x="428.26" y="196.00" font-size="9.6" fill="#333333" font-weight="normal" textLength="7.28" lengthAdjust="spacingAndGlyphs" >H</text>
<rect x="455.20" y="189" width="1.3" height="7" fill="#333"/>
<text x="477.41" y="196.00" font-size="9.6" fill="#333333" font-weight="normal" textLength="3.79" lengthAdjust="spacingAndGlyphs" >J</text>
<text x="509.75" y="196.00" font-size="9.6" fill="#333333" font-weight="normal" textLength="6.10" lengthAdjust="spacingAndGlyphs" >K</text>
<text x="561.33" y="196.00" font-size="9.6" fill="#333333" font-weight="normal" textLength="4.95" lengthAdjust="spacingAndGlyphs" >L</text>
<text x="606.83" y="196.00" font-size="9.6" fill="#333333" font-weight="normal" textLength="9.95" lengthAdjust="spacingAndGlyphs" >M</text>
<text x="656.03" y="196.00" font-size="9.6" fill="#333333" font-weight="normal" textLength="7.55" lengthAdjust="spacingAndGlyphs" >N</text>
<text x="703.93" y="196.00" font-size="9.6" fill="#333333" font-weight="normal" textLength="7.73" lengthAdjust="spacingAndGlyphs" >O</text>
<text x="752.77" y="196.00" font-size="9.6" fill="#333333" font-weight="normal" textLength="6.06" lengthAdjust="spacingAndGlyphs" >P</text>
<text x="799.87" y="196.00" font-size="9.6" fill="#333333" font-weight="normal" textLength="7.86" lengthAdjust="spacingAndGlyphs" >Q</text>
<text x="848.62" y="196.00" font-size="9.6" fill="#333333" font-weight="normal" textLength="6.36" lengthAdjust="spacingAndGlyphs" >R</text>
<text x="897.10" y="196.00" font-size="9.6" fill="#333333" font-weight="normal" textLength="5.40" lengthAdjust="spacingAndGlyphs" >S</text>
<text x="944.94" y="196.00" font-size="9.6" fill="#333333" font-weight="normal" textLength="5.72" lengthAdjust="spacingAndGlyphs" >T</text>
<text x="992.05" y="196.00" font-size="9.6" fill="#333333" font-weight="normal" textLength="7.50" lengthAdjust="spacingAndGlyphs" >U</text>
<text x="21.31" y="211.60" font-size="9.9" fill="#000000" font-weight="bold" textLength="182.79" lengthAdjust="spacingAndGlyphs" >Use the Check Figures from Part B here.</text>
<text x="63.21" y="226.60" font-size="9.9" fill="#404040" font-weight="bold" textLength="201.49" lengthAdjust="spacingAndGlyphs" >Shoes for You, Inc. Balance Sheet March 31,</text>
<text x="152.81" y="241.20" font-size="9.9" fill="#404040" font-weight="bold" textLength="22.29" lengthAdjust="spacingAndGlyphs" >2016</text>
<text x="21.31" y="255.80" font-size="9.9" fill="#262626" font-weight="bold" textLength="42.29" lengthAdjust="spacingAndGlyphs" >Solution:</text>
<text x="54.41" y="270.20" font-size="9.9" fill="#000000" font-weight="bold" textLength="30.89" lengthAdjust="spacingAndGlyphs" >Assets</text>
<text x="54.41" y="285.20" font-size="9.9" fill="#000000" font-weight="bold" textLength="67.99" lengthAdjust="spacingAndGlyphs" >Current Assets</text>
<text x="54.41" y="300.20" font-size="9.9" fill="#000000" font-weight="normal" textLength="22.09" lengthAdjust="spacingAndGlyphs" >Cash</text>
<text x="54.41" y="315.20" font-size="9.9" fill="#000000" font-weight="normal" textLength="88.99" lengthAdjust="spacingAndGlyphs" >Account receivable</text>
<text x="54.41" y="330.20" font-size="9.9" fill="#000000" font-weight="normal" textLength="45.29" lengthAdjust="spacingAndGlyphs" >Inventory</text>
<text x="54.41" y="345.20" font-size="9.9" fill="#000000" font-weight="normal" textLength="77.79" lengthAdjust="spacingAndGlyphs" >Prpaid Insurance</text>
<text x="54.41" y="360.20" font-size="9.9" fill="#000000" font-weight="bold" textLength="60.89" lengthAdjust="spacingAndGlyphs" >Total Assests</text>
<text x="54.41" y="390.20" font-size="9.9" fill="#000000" font-weight="bold" textLength="141.69" lengthAdjust="spacingAndGlyphs" >Building, Plant and equipment</text>
<text x="54.41" y="405.20" font-size="9.9" fill="#000000" font-weight="normal" textLength="38.89" lengthAdjust="spacingAndGlyphs" >Building</text>
<text x="54.41" y="420.20" font-size="9.9" fill="#000000" font-weight="normal" textLength="87.69" lengthAdjust="spacingAndGlyphs" >Display Equipment</text>
<text x="54.41" y="435.20" font-size="9.9" fill="#000000" font-weight="normal" textLength="127.19" lengthAdjust="spacingAndGlyphs" >Less: Acc. Dep. - Equipment</text>
<text x="54.41" y="450.20" font-size="9.9" fill="#000000" font-weight="bold" textLength="167.19" lengthAdjust="spacingAndGlyphs" >Total Building, Plant and equipment</text>
<text x="54.41" y="465.20" font-size="9.9" fill="#000000" font-weight="bold" textLength="56.19" lengthAdjust="spacingAndGlyphs" >Total Assets</text>
<text x="54.41" y="495.20" font-size="9.9" fill="#000000" font-weight="bold" textLength="160.69" lengthAdjust="spacingAndGlyphs" >Liabilities and stockholders' Equity</text>
<text x="54.41" y="510.20" font-size="9.9" fill="#000000" font-weight="bold" textLength="83.19" lengthAdjust="spacingAndGlyphs" >Current Liabilities</text>
<text x="325.41" y="300.20" font-size="9.9" fill="#000000" font-weight="normal" textLength="40.99" lengthAdjust="spacingAndGlyphs" >$318,230</text>
<text x="354.41" y="315.20" font-size="9.9" fill="#000000" font-weight="normal" textLength="11.99" lengthAdjust="spacingAndGlyphs" >$0</text>
<text x="330.41" y="330.20" font-size="9.9" fill="#000000" font-weight="normal" textLength="35.99" lengthAdjust="spacingAndGlyphs" >$70,170</text>
<text x="344.41" y="345.20" font-size="9.9" fill="#000000" font-weight="normal" textLength="21.99" lengthAdjust="spacingAndGlyphs" >$780</text>
<text x="378.91" y="360.20" font-size="9.9" fill="#000000" font-weight="bold" textLength="40.99" lengthAdjust="spacingAndGlyphs" >$389,180</text>
<text x="325.41" y="405.20" font-size="9.9" fill="#000000" font-weight="normal" textLength="40.99" lengthAdjust="spacingAndGlyphs" >$240,000</text>
<text x="344.91" y="420.20" font-size="9.9" fill="#000000" font-weight="normal" textLength="25.19" lengthAdjust="spacingAndGlyphs" >1,200</text>
<text x="335.91" y="435.20" font-size="9.9" fill="#000000" font-weight="normal" textLength="30.49" lengthAdjust="spacingAndGlyphs" >$1,020</text>
<text x="378.91" y="450.20" font-size="9.9" fill="#000000" font-weight="bold" textLength="40.99" lengthAdjust="spacingAndGlyphs" >$240,180</text>
<text x="378.91" y="465.20" font-size="9.9" fill="#000000" font-weight="bold" textLength="40.99" lengthAdjust="spacingAndGlyphs" >$629,360</text>
<rect x="323" y="259" width="49" height="15" fill="none" stroke="#217346" stroke-width="2"/>
<rect x="368.8" y="270.8" width="5.4" height="5.4" fill="#ffffff" />
<rect x="369.6" y="271.6" width="3.8" height="3.8" fill="#217346" />
<rect x="1008" y="185" width="16" height="323.5" fill="#e6e6e6" />
<rect x="1008.5" y="199" width="13.5" height="309" fill="#dadada" />
<rect x="1010.5" y="187.5" width="11" height="10" fill="#fff" stroke="#c6c6c6" stroke-width="1"/>
<path d="M1013.5 194.5 h5 l-2.5 -2.5 z" stroke="none" fill="#555" stroke-width="1" />
<rect x="1010.5" y="499.5" width="11" height="9" fill="#fff" stroke="#c6c6c6" stroke-width="1"/>
<path d="M1013.5 502.5 h5 l-2.5 2.5 z" stroke="none" fill="#555" stroke-width="1" />
<rect x="0" y="508" width="1024" height="21" fill="#e6e6e6" />
<line x1="0" y1="508.5" x2="1024" y2="508.5" stroke="#c6c6c6" stroke-width="1" />
<path d="M23 516 v5.5 l-3 -2.75 z" stroke="none" fill="#1e7145" stroke-width="1" />
<path d="M41.5 516 v5.5 l3 -2.75 z" stroke="none" fill="#1e7145" stroke-width="1" />
<rect x="61" y="520.3" width="1.6" height="1.7" fill="#1e7145" />
<rect x="64.3" y="520.3" width="1.6" height="1.7" fill="#1e7145" />
<rect x="67.6" y="520.3" width="1.6" height="1.7" fill="#1e7145" />
<line x1="75.7" y1="512" x2="75.7" y2="526" stroke="#b0b0b0" stroke-width="1" />
<text x="86.02" y="522.00" font-size="9.6" fill="#444" font-weight="normal" textLength="66.15" lengthAdjust="spacingAndGlyphs" >C. Trial Balance</text>
<rect x="164.5" y="508.5" width="95" height="18.5" fill="#ffffff" />
<line x1="164.5" y1="508" x2="164.5" y2="527" stroke="#c6c6c6" stroke-width="1" />
<line x1="259.5" y1="508" x2="259.5" y2="527" stroke="#c6c6c6" stroke-width="1" />
<rect x="164.5" y="525.5" width="95" height="1.8" fill="#217346" />
<text x="172.92" y="522.00" font-size="9.6" fill="#1e7145" font-weight="bold" textLength="78.35" lengthAdjust="spacingAndGlyphs" >D. Balance Sheet</text>
<text x="269.72" y="522.00" font-size="9.6" fill="#444" font-weight="normal" textLength="91.05" lengthAdjust="spacingAndGlyphs" >E. Retained Earnings</text>
<line x1="373" y1="512" x2="373" y2="526" stroke="#b0b0b0" stroke-width="1" />
<text x="384.22" y="522.00" font-size="9.6" fill="#444" font-weight="normal" textLength="117.55" lengthAdjust="spacingAndGlyphs" >F. Statement of Cash Flows</text>
<line x1="515.6" y1="512" x2="515.6" y2="526" stroke="#b0b0b0" stroke-width="1" />
<text x="526.72" y="522.00" font-size="9.6" fill="#444" font-weight="normal" textLength="35.15" lengthAdjust="spacingAndGlyphs" >G. Ratio</text>
<rect x="568.6" y="520.3" width="1.6" height="1.7" fill="#1e7145" />
<rect x="571.9" y="520.3" width="1.6" height="1.7" fill="#1e7145" />
<rect x="575.2" y="520.3" width="1.6" height="1.7" fill="#1e7145" />
<circle cx="593.2" cy="518.4" r="6" fill="none" stroke="#666" stroke-width="1"/>
<path d="M593.2 515 v6.8 M589.8 518.4 h6.8" stroke="#666" fill="none" stroke-width="1.4" />
<rect x="614.3" y="514.5" width="1" height="1.3" fill="#999" />
<rect x="614.3" y="518" width="1" height="1.3" fill="#999" />
<rect x="614.3" y="521.5" width="1" height="1.3" fill="#999" />
<rect x="627.5" y="513.5" width="10" height="11" fill="#fff" stroke="#c6c6c6" stroke-width="1"/>
<path d="M633.5 516.5 v5 l-2.5 -2.5 z" stroke="none" fill="#555" stroke-width="1" />
<rect x="637.5" y="513.5" width="341" height="11" fill="#fff" stroke="#c6c6c6" stroke-width="1"/>
<rect x="979" y="514" width="18.5" height="10.5" fill="#d4d4d4" />
<rect x="998.5" y="513.5" width="11" height="11" fill="#fff" stroke="#c6c6c6" stroke-width="1"/>
<path d="M1002.5 516.5 v5 l2.5 -2.5 z" stroke="none" fill="#555" stroke-width="1" />
<rect x="0" y="529" width="1024" height="17" fill="#f3f2f1" />
<line x1="0" y1="529" x2="1024" y2="529" stroke="#dcdcdc" stroke-width="1" />
<circle cx="8.5" cy="534.5" r="2.2" fill="#666"/>
<rect x="7.5" y="536.5" width="8.5" height="5.5" fill="none" stroke="#666" stroke-width="0.9"/>
<line x1="10" y1="537" x2="10" y2="542" stroke="#888" stroke-width="0.6" />
<line x1="12.5" y1="537" x2="12.5" y2="542" stroke="#888" stroke-width="0.6" />
<line x1="7.5" y1="539.3" x2="16" y2="539.3" stroke="#888" stroke-width="0.6" />
<rect x="809.8" y="529.5" width="27.8" height="16" fill="#d4d4d4" />
<rect x="818.5" y="532.5" width="10" height="9" fill="none" stroke="#8a8a8a" stroke-width="1"/>
<line x1="821.8" y1="532.5" x2="821.8" y2="541.5" stroke="#8a8a8a" stroke-width="0.8" />
<line x1="825.2" y1="532.5" x2="825.2" y2="541.5" stroke="#8a8a8a" stroke-width="0.8" />
<line x1="818.5" y1="535.5" x2="828.5" y2="535.5" stroke="#8a8a8a" stroke-width="0.8" />
<line x1="818.5" y1="538.5" x2="828.5" y2="538.5" stroke="#8a8a8a" stroke-width="0.8" />
<rect x="847.5" y="533" width="10.5" height="9" fill="none" stroke="#666" stroke-width="1"/>
<rect x="850" y="535.5" width="5.5" height="4" fill="none" stroke="#666" stroke-width="0.9"/>
<path d="M876 533 v9 h10 v-9 M879.5 533 v4 h3 v-4" stroke="#666" fill="none" stroke-width="1" />
<line x1="899" y1="538.5" x2="903" y2="538.5" stroke="#444" stroke-width="1.2" />
<line x1="906" y1="538.5" x2="980.5" y2="538.5" stroke="#b8b8b8" stroke-width="1" />
<rect x="942.2" y="533.2" width="4" height="8.3" fill="#777" />
<path d="M984 538.5 h5.4 M986.7 535.8 v5.4" stroke="#444" fill="none" stroke-width="1.1" />
<text x="997.45" y="541.00" font-size="9.2" fill="#444" font-weight="normal" textLength="20.80" lengthAdjust="spacingAndGlyphs" >100%</text>
<rect x="0" y="546" width="1024" height="30" fill="#2a2d32" />
<path d="M12.5 557 l5-0.7 v4.8 h-5 z M18.5 556.2 l6 -0.9 v5.8 h-6 z M12.5 562 h5 v4.8 l-5 -0.7 z M18.5 562 h6 v5.8 l-6 -0.9 z" stroke="none" fill="#ffffff" stroke-width="1" />
<rect x="36.5" y="547" width="257.5" height="29" fill="#f2f2f2" />
<circle cx="51" cy="561.6" r="6.3" fill="none" stroke="#000" stroke-width="1.8"/>
<text x="65.36" y="566.00" font-size="10.6" fill="#444" font-weight="normal" textLength="96.97" lengthAdjust="spacingAndGlyphs" >Type here to search</text>
<rect x="276" y="555" width="4.5" height="8" rx="2.2" fill="none" stroke="#333" stroke-width="1"/>
<path d="M274.5 561 c0 4 7.5 4 7.5 0 M278.2 565 v2 M275.5 567.5 h5.5" stroke="#333" fill="none" stroke-width="1" />
<path d="M306 555.3 v1.2 h10 v-1.2 M306 566.3 v-1.2 h10 v1.2" stroke="#fff" fill="none" stroke-width="0.9" />
<rect x="306.5" y="558" width="9" height="5.5" fill="none" stroke="#fff" stroke-width="1"/>
<line x1="317.5" y1="555" x2="317.5" y2="566.5" stroke="#fff" stroke-width="0.9" />
<rect x="316.5" y="558" width="2.2" height="2" fill="#fff" />
<path d="M342 555 h5 l1.2 1.2 h9.8 v11 h-16 z" stroke="none" fill="#f3c55a" stroke-width="1" />
<rect x="342" y="557" width="16" height="10.4" fill="#fbe08f" />
<path d="M344.8 567.8 v-6 h9.8 v6 h-2.8 v-3.3 h-4.2 v3.3 z" stroke="none" fill="#3a9ee6" stroke-width="1" />
<path d="M378.5 556.2 h16.5 v12.3 a0.8 0.8 0 0 1 -0.8 0.8 h-14.9 a0.8 0.8 0 0 1 -0.8 -0.8 z" stroke="none" fill="#ffffff" stroke-width="1" />
<path d="M383 556.5 v-1.5 a3.6 3.6 0 0 1 7.2 0 v1.5" stroke="#fff" fill="none" stroke-width="1.1" />
<rect x="382" y="558.6" width="4.3" height="3.9" fill="#f25022" />
<rect x="387" y="558.6" width="4.3" height="3.9" fill="#7fba00" />
<rect x="382" y="563.1" width="4.3" height="3.9" fill="#00a4ef" />
<rect x="387" y="563.1" width="4.3" height="3.9" fill="#ffb900" />
<text x="415" y="567.8" font-size="24" font-weight="bold" fill="#0a7ad6" font-family="Liberation Sans" textLength="16" lengthAdjust="spacingAndGlyphs">e</text>
<path d="M416.5 557.5 c2 -3.5 6 -5 9.5 -4" stroke="#0a7ad6" fill="none" stroke-width="1.6" />
<circle cx="460.5" cy="561.5" r="8.3" fill="#dd4b39"/>
<path d="M460.5 561.5 L468.8 561.5 A8.3 8.3 0 0 1 456.35 568.69 z" stroke="none" fill="#ffcd40" stroke-width="1" />
<path d="M460.5 561.5 L456.35 568.69 A8.3 8.3 0 0 1 452.2 561.5 z" stroke="none" fill="#1da462" stroke-width="1" />
<path d="M452.2 561.5 A8.3 8.3 0 0 1 454.5 555.6 L460.5 561.5 z" stroke="none" fill="#1da462" stroke-width="1" />
<circle cx="460.5" cy="561.5" r="3.6" fill="#fff"/><circle cx="460.5" cy="561.5" r="2.8" fill="#4285f4"/>
<circle cx="465" cy="566.5" r="4.5" fill="#5a5a40"/>
<path d="M487.8 559 l9.2 -6.2 l9.2 6.2 v9 h-18.4 z" stroke="none" fill="#ffffff" stroke-width="1" />
<path d="M488.5 559.5 l8.5 0 l8.5 0" stroke="#2a2d32" fill="none" stroke-width="0.6" />
<path d="M488.8 558.6 h16.6 l-4.6 1.4 l2 3.6 l-4.5 -3.5 z" stroke="none" fill="#2a2d32" stroke-width="1" />
<rect x="515.8" y="546.3" width="36" height="28" fill="#4a4d52" />
<rect x="534.5" y="554.5" width="7.8" height="12.5" fill="#6cc28a" />
<line x1="534.5" y1="557.5" x2="542.3" y2="557.5" stroke="#1d6f42" stroke-width="0.7" />
<line x1="534.5" y1="560.5" x2="542.3" y2="560.5" stroke="#1d6f42" stroke-width="0.7" />
<line x1="534.5" y1="563.5" x2="542.3" y2="563.5" stroke="#1d6f42" stroke-width="0.7" />
<line x1="538.3" y1="554.5" x2="538.3" y2="567" stroke="#1d6f42" stroke-width="0.7" />
<path d="M525.1 554 l10 -1.3 v16.6 l-10 -1.3 z" stroke="none" fill="#1e7145" stroke-width="1" />
<text x="526.29" y="564.80" font-size="8.5" fill="#fff" font-weight="bold" textLength="6.72" lengthAdjust="spacingAndGlyphs" >X</text>
<rect x="571.4" y="554" width="7.6" height="13.5" fill="#ffffff" />
<line x1="572.5" y1="557" x2="578" y2="557" stroke="#2b579a" stroke-width="0.8" />
<line x1="572.5" y1="559.5" x2="578" y2="559.5" stroke="#2b579a" stroke-width="0.8" />
<line x1="572.5" y1="562" x2="578" y2="562" stroke="#2b579a" stroke-width="0.8" />
<line x1="572.5" y1="564.5" x2="578" y2="564.5" stroke="#2b579a" stroke-width="0.8" />
<path d="M562 554 l10 -1.3 v16.6 l-10 -1.3 z" stroke="none" fill="#2b579a" stroke-width="1" />
<text x="562.55" y="564.80" font-size="7.5" fill="#fff" font-weight="bold" textLength="8.90" lengthAdjust="spacingAndGlyphs" >W</text>
<rect x="408.7" y="574" width="29.80000000000001" height="2" fill="#76b9ed" />
<rect x="445.3" y="574" width="29.899999999999977" height="2" fill="#76b9ed" />
<rect x="516.5" y="574" width="35.10000000000002" height="2" fill="#76b9ed" />
<rect x="555" y="574" width="31" height="2" fill="#76b9ed" />
<circle cx="767" cy="561" r="7.5" fill="#1a7fd0" stroke="#fff" stroke-width="1.1"/>
<text x="762.84" y="565.50" font-size="11" fill="#fff" font-weight="bold" textLength="7.82" lengthAdjust="spacingAndGlyphs" >?</text>
<circle cx="773" cy="566" r="3" fill="#f5a623"/>
<circle cx="801" cy="557" r="2.3" fill="none" stroke="#fff" stroke-width="0.9"/><circle cx="796" cy="560" r="2.3" fill="none" stroke="#fff" stroke-width="0.9"/>
<path d="M792.5 567 c0-3 7-3 7 0 M798 564 c1-2 6-2 6 1" stroke="#fff" fill="none" stroke-width="0.9" />
<path d="M823.5 563 l5 -4.5 l5 4.5" stroke="#fff" fill="none" stroke-width="1.1" />
<path d="M846 563.5 c0-2 1.5-3 3-3 c1-2.5 4-3.5 6-1.5 c2 -0.5 4 1 4 3 c1.5 0 2 1 2 1.5 z" stroke="none" fill="#fff" stroke-width="1" />
<path d="M871 557 l2.8-1.8 l2.8 1.8 l-2.8 1.8 z M876.6 557 l2.8-1.8 l2.8 1.8 l-2.8 1.8 z M871 560.6 l2.8-1.8 l2.8 1.8 l-2.8 1.8 z M876.6 560.6 l2.8-1.8 l2.8 1.8 l-2.8 1.8 z M873.8 563.6 l2.8-1.8 l2.8 1.8 l-2.8 1.8 z" stroke="none" fill="#fff" stroke-width="1" />
<path d="M894 559 h2.5 l3.5-3 v11 l-3.5-3 h-2.5 z" stroke="#fff" fill="none" stroke-width="0.9" />
<path d="M901.5 559 c1 1.5 1 3.5 0 5 M903.5 557.5 c2 2.5 2 5.5 0 8 M905.5 556 c2.5 3.5 2.5 7.5 0 11" stroke="#fff" fill="none" stroke-width="0.9" />
<path d="M918 557 v5 M918 557 h3" stroke="#fff" fill="none" stroke-width="1" />
<rect x="919.5" y="559.5" width="11" height="5" fill="none" stroke="#fff" stroke-width="1"/>
<rect x="920.5" y="560.5" width="7" height="3" fill="#fff" />
<text x="951.42" y="557.90" font-size="9.6" fill="#fff" font-weight="normal" textLength="17.15" lengthAdjust="spacingAndGlyphs" >3:18</text>
<text x="939.62" y="571.50" font-size="9.6" fill="#fff" font-weight="normal" textLength="40.85" lengthAdjust="spacingAndGlyphs" >2/11/2019</text>
<line x1="1021.5" y1="546" x2="1021.5" y2="576" stroke="#5a5d62" stroke-width="1" />
<path d="M993 553.5 h14 v11 h-9 l-4 4 v-4 h-1 z" stroke="none" fill="#fff" stroke-width="1" />
<line x1="995" y1="556.5" x2="1005" y2="556.5" stroke="#2a2d32" stroke-width="0.9" />
<line x1="995" y1="559" x2="1005" y2="559" stroke="#2a2d32" stroke-width="0.9" />
<line x1="995" y1="561.5" x2="1005" y2="561.5" stroke="#2a2d32" stroke-width="0.9" />
<circle cx="1004.5" cy="566.5" r="5.5" fill="#2a2e32" stroke="#fff" stroke-width="0.9"/>
<text x="1002.02" y="569.80" font-size="8" fill="#fff" font-weight="bold" textLength="5.26" lengthAdjust="spacingAndGlyphs" >2</text>
</svg>
</body></html>
